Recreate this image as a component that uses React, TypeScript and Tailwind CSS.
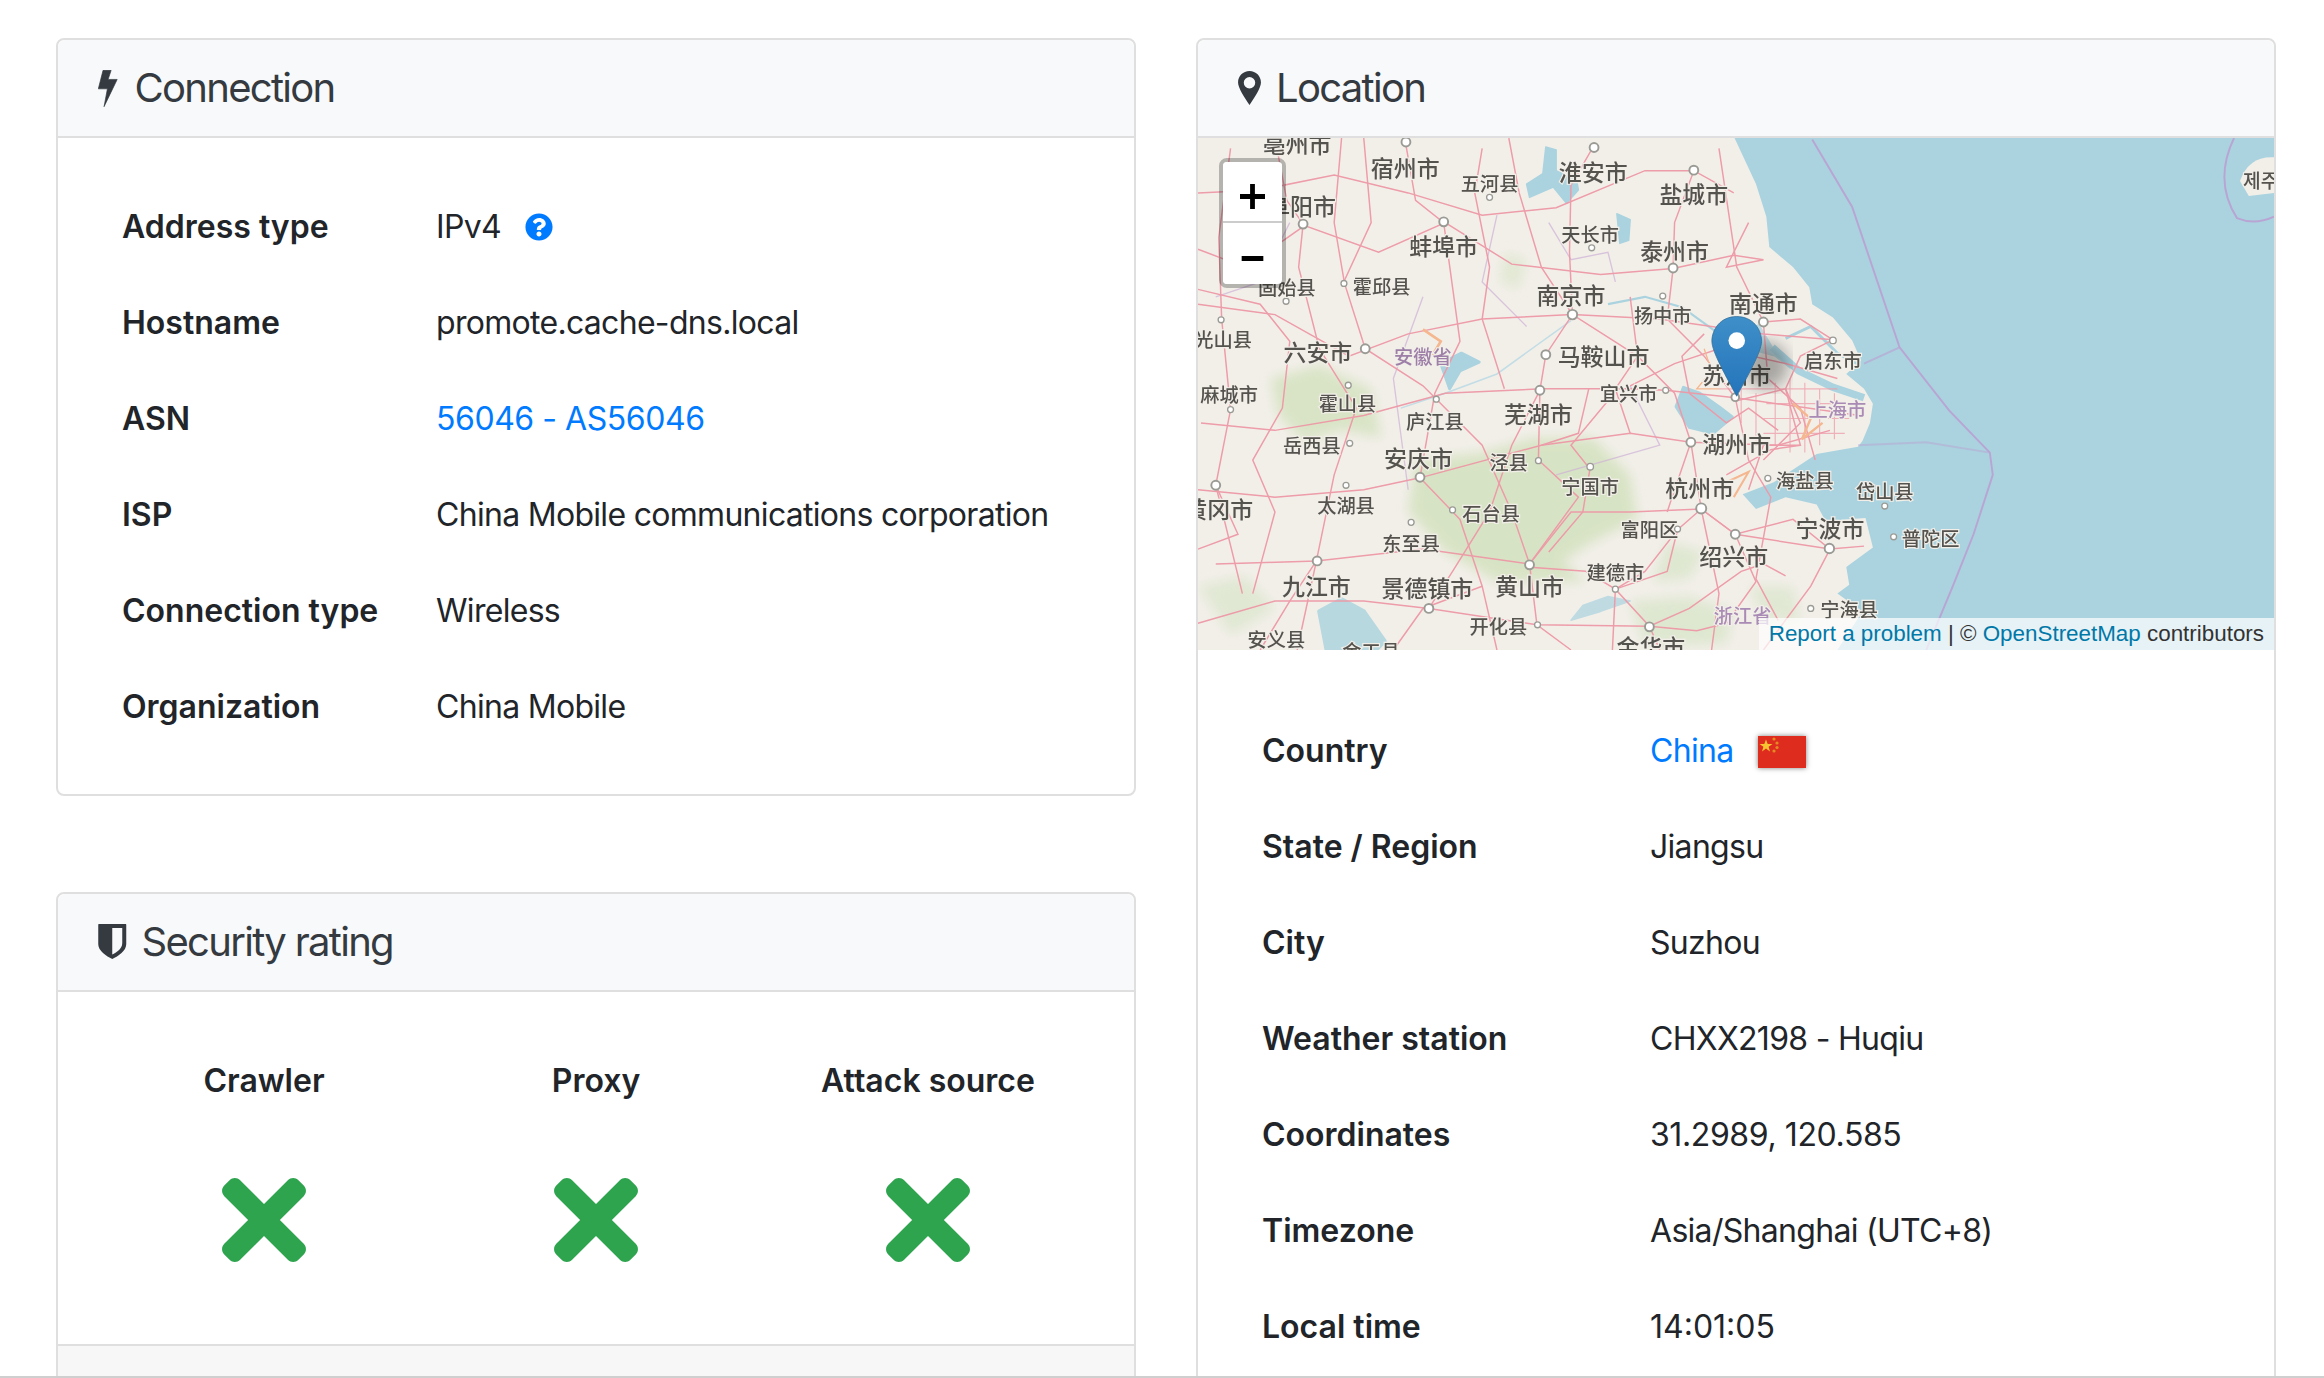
import React from 'react';
import { FaQuestionCircle, FaTimes } from 'react-icons/fa';

const labels: [string, number, number, number?, string?][] = [
  ['亳州市', 875, 103], ['宿州市', 948, 119], ['五河县', 1005, 129, 13], ['淮安市', 1075, 122], ['盐城市', 1143, 137],
  ['阜阳市', 878, 145], ['蚌埠市', 974, 172], ['天长市', 1073, 163, 13], ['泰州市', 1130, 175], ['固始县', 868, 199, 13],
  ['霍邱县', 932, 198, 13], ['南京市', 1060, 205], ['扬中市', 1122, 218, 13], ['南通市', 1190, 210], ['光山县', 825, 234, 13],
  ['六安市', 889, 243], ['安徽省', 960, 245, 13, '#9d7fa8'], ['马鞍山市', 1082, 246], ['启东市', 1237, 248, 13],
  ['苏州市', 1172, 259], ['麻城市', 829, 271, 13], ['霍山县', 909, 277, 13], ['宜兴市', 1099, 270, 13], ['庐江县', 968, 289, 13],
  ['芜湖市', 1038, 285], ['上海市', 1240, 281, 13, '#a98bb5'], ['岳西县', 885, 305, 13], ['湖州市', 1172, 305], ['安庆市', 957, 315],
  ['泾县', 1018, 317, 13], ['宁国市', 1073, 333, 13], ['杭州市', 1147, 335], ['海盐县', 1218, 329, 13], ['岱山县', 1272, 336, 13],
  ['黄冈市', 822, 349], ['太湖县', 908, 346, 13], ['石台县', 1006, 351, 13], ['富阳区', 1113, 362, 13], ['宁波市', 1235, 362],
  ['普陀区', 1303, 368, 13], ['东至县', 952, 371, 13], ['绍兴市', 1170, 381], ['建德市', 1090, 391, 13], ['九江市', 888, 401],
  ['景德镇市', 963, 402], ['黄山市', 1032, 401], ['开化县', 1011, 427, 13], ['宁海县', 1248, 416, 13], ['浙江省', 1176, 420, 13, '#a98bb5'],
  ['安义县', 861, 436, 13], ['金华市', 1114, 442], ['金工县', 925, 444, 13], ['제주', 1526, 127, 13],
];

const towns: [number, number, number][] = [
  [1075.6, 99.4, 3], [1143, 114.7, 3], [1129, 180.6, 3], [1122, 199.5, 2], [1061, 212, 3.2], [1190, 217, 3], [1237, 229.4, 2.2],
  [1043, 239, 3], [1039, 263, 3], [1124, 263, 2], [1171, 267.7, 2.6], [1074, 167, 2], [1141, 298, 3], [1038, 310.4, 2],
  [1073, 314.5, 2.2], [1193, 322.3, 2], [1148, 342.6, 3.4], [1132, 356.5, 2], [1171, 360, 3], [1234.6, 369.6, 3.2], [1272, 341, 2],
  [1278, 361.7, 2], [1032, 380.6, 3], [1090, 397, 2], [1222, 410, 2], [1037.4, 421, 2], [1113, 422.4, 3], [948.5, 95.7, 3],
  [879, 151, 3], [974, 149.5, 3], [1005, 133, 2], [906.6, 191, 2], [867.5, 203, 2], [823.6, 215.5, 2], [921, 235, 3], [909.5, 259.6, 2],
  [830, 276, 2], [969, 269, 2], [910.5, 298.7, 2], [958, 321.6, 3], [908, 327, 2], [820, 327, 3], [980, 343.6, 2], [952, 352, 2],
  [888.5, 378, 3], [964, 410, 3],
];

const roads = [
  'M808 130 L850 128 L900 118 L950 130 L1000 145 L1050 140 L1110 115 L1143 115 L1170 130',
  'M808 168 L840 180 L880 152 L930 170 L975 150 L1020 178 L1080 185 L1129 181 L1170 172 L1190 175',
  'M808 205 L860 212 L910 240 L950 225 L1000 215 L1061 212 L1120 215 L1190 225 L1237 229',
  'M810 285 L860 290 L920 280 L975 265 L1040 262 L1100 262 L1124 263 L1171 268 L1220 275 L1255 280',
  'M808 330 L860 335 L920 330 L958 322 L1040 300 L1100 292 L1141 298 L1200 300 L1235 290',
  'M820 380 L888 378 L960 370 L1032 380 L1060 345 L1100 345 L1148 343 L1171 360 L1235 370 L1258 368',
  'M808 420 L860 405 L920 405 L964 410 L1037 421 L1113 422 L1140 410 L1175 385 L1190 380 L1205 388',
  'M860 93 L868 135 L879 151 L876 180 L890 235 L915 275 L900 320 L888 378 L875 438',
  'M948 95 L955 135 L974 150 L985 230 L968 265 L958 322 L985 350 L1000 395 L1010 438',
  'M1018 93 L1025 130 L1040 180 L1061 212 L1043 239 L1039 263 L1038 310 L1065 335 L1032 380 L1037 421 L1060 438',
  'M1075 99 L1060 125 L1059 170 L1061 212 L1105 240 L1130 265 L1141 298 L1148 343 L1160 400 L1155 438',
  'M1143 115 L1130 150 L1129 181 L1125 215 L1150 240 L1171 268 L1180 310 L1195 335 L1185 390 L1200 418',
  'M1160 100 L1172 180 L1190 217 L1193 255 L1215 275 L1225 310',
  'M1237 229 L1215 240 L1205 262 L1215 285 L1190 310',
  'M830 100 L822 160 L824 215 L830 276 L820 327 L838 400',
  'M905 93 L900 150 L907 191 L921 235 L960 260 L1000 300 L1020 345 L1032 380',
  'M1039 263 L1020 300 L1005 345 L980 385 L964 410',
  'M1100 260 L1130 245 L1160 235 L1205 245 L1240 255',
  'M1148 343 L1132 357 L1110 385 L1090 397 L1088 438',
  'M1148 343 L1171 360 L1210 350 L1235 370 L1222 395 L1190 438',
  'M1172 270 L1205 262 L1215 300 L1190 300 L1180 330',
  'M1150 225 L1135 240 L1140 265 L1165 285 L1180 275 L1200 290',
  'M808 195 L850 205 L870 230 L865 275 L845 310 L860 345 L845 400',
  'M1090 397 L1125 385 L1132 357',
  'M1120 438 L1113 422 L1090 397 L1070 385 L1030 382',
  'M1171 360 L1185 392 L1165 420 L1145 425 L1113 422',
  'M1072 315 L1060 300 L1085 270 M1073 315 L1068 345 L1045 372',
  'M1141 298 L1130 330 L1125 345 M1165 320 L1195 303 L1215 300',
  'M1100 200 L1105 240 L1090 262 L1100 292 M1072 262 L1065 292 L1040 300',
  'M1000 100 L995 130 L1005 180 L1000 215 L1015 262 M920 93 L925 150 L906 191',
  'M1180 150 L1165 180 L1190 175 M1190 217 L1215 215 L1237 229',
  'M940 438 L960 410 L1000 395 M850 438 L870 405 L888 378 M808 370 L835 360 L820 327',
];

// streets around Shanghai, drawn close together
const cityGrid = 'M1195 262 H1240 M1192 272 H1245 M1190 282 H1248 M1190 292 H1245 M1198 258 V300 M1208 255 V305 M1218 258 V305 M1228 262 V300 M1238 265 V296 M1175 262 V285 M1185 265 V300 M1160 262 H1195';

// picture of the map, in the same coordinates as the rest of the tile
function MapTile() {
  return (
    <svg viewBox="808 93 727 345" className="block w-full h-full" preserveAspectRatio="none">
      <defs>
        <filter id="soft"><feGaussianBlur stdDeviation="0.4" /></filter>
        <filter id="softer"><feGaussianBlur stdDeviation="4" /></filter>
        <filter id="shade"><feGaussianBlur stdDeviation="5" /></filter>
        <linearGradient id="pin" x1="0" y1="0" x2="0" y2="1">
          <stop offset="0" stopColor="#3f8fc9" />
          <stop offset="1" stopColor="#2374bb" />
        </linearGradient>
      </defs>
      <rect x="808" y="93" width="727" height="345" fill="#aad3df" />
      <path
        d="M808 93 L1170.5 93 L1185 124 L1192 146 L1194 166.5 L1210 180 L1221 193.5 L1223 205 L1237 214 L1250 229.5 L1256 243 L1246 252 L1258 262 L1264 272 L1262 285 L1257 297 L1254 301 L1226 306 L1197 325 L1176 333 L1185 343 L1205 335 L1226 340 L1232 351 L1259 349 L1264 369 L1246 382 L1248 394 L1240 400 L1257 412 L1240 438 L808 438 Z"
        fill="#f2efe9"
      />
      <g filter="url(#softer)" opacity="0.7">
        <path d="M857 255 L890 246 L925 262 L932 295 L905 290 L880 298 L862 280 Z" fill="#cfe0b8" />
        <path d="M955 310 L1000 305 L1035 295 L1075 295 L1100 320 L1105 350 L1075 365 L1055 378 L1070 392 L1010 392 L975 372 L950 345 Z" fill="#cddfb6" />
        <path d="M1100 405 L1140 402 L1170 412 L1165 434 L1110 436 Z" fill="#d6e4c6" />
        <path d="M1125 365 L1150 372 L1140 390 L1115 392 Z" fill="#d6e4c6" />
        <path d="M808 395 L840 388 L860 410 L830 428 Z" fill="#d9e5ca" />
        <path d="M1180 395 L1210 395 L1215 420 L1190 418 Z" fill="#d9e5ca" />
        <path d="M1015 170 L1030 175 L1025 195 L1012 190 Z" fill="#dbe6cb" />
      </g>
      <g fill="#aad3df" stroke="#aad3df" strokeLinejoin="round">
        <path d="M1136 261 L1147 265 L1160 274 L1169 281 L1156 292 L1140 288 L1131 274 Z" strokeWidth="2" />
        <path d="M1043 99 L1050 101 L1050 115 L1064 122 L1065 128 L1057 137 L1048 126 L1032 133 L1030 124 L1041 117 Z" strokeWidth="1" />
        <path d="M1091 144 L1100 148 L1099 162 L1093 164 Z" strokeWidth="1" />
        <path d="M972 245 L986 238 L998 244 L985 250 L978 262 Z" strokeWidth="2" />
        <path d="M890 412 L905 404 L920 412 L934 432 L928 438 L895 438 Z" strokeWidth="3" opacity="0.8" />
        <path d="M1100 405 L1080 412 L1060 418 L1068 408 L1085 402 Z" strokeWidth="1" opacity="0.7" />
        <path d="M1160 225 L1187 219 L1196 234 L1208 248 L1198 240 L1180 235 Z" strokeWidth="1" opacity="0.75" />
      </g>
      <path d="M1196 234 L1214 250 L1237 261 L1258 268" fill="none" stroke="#aad3df" strokeWidth="5" />
      <path d="M1205 228 L1222 220 L1240 238 L1255 246" fill="none" stroke="#aad3df" strokeWidth="2" />
      <path d="M1085 205 L1110 200 L1135 207 L1160 225" fill="none" stroke="#aad3df" strokeWidth="1.5" />
      <path d="M945 275 L975 265 L1010 252 L1060 216" fill="none" stroke="#c2dde5" strokeWidth="1" />
      <path d="M1512 122 Q1518 105 1535 106 L1535 130 L1518 132 Z" fill="#f2efe9" />
      <path d="M1508 93 Q1494 122 1510 147 Q1522 152 1535 146" fill="none" stroke="#b9a5d3" strokeWidth="1.3" />
      <g fill="none" stroke="#b9a5d3" strokeWidth="1.3">
        <path d="M1223 94 L1250 139.5 L1282 234 L1315.6 276.7 L1343 305 L1345 320 L1332 360 L1318 395 L1300 438" />
        <path d="M1282 234 L1258 245" opacity="0.7" />
        <path d="M1343 305 L1300 298 L1254 300" opacity="0.5" />
      </g>
      <path d="M1010 145 L1000 190 L1030 220 M960 200 L940 255 L950 330 M870 150 L850 190 L820 200 M1100 260 L1120 300 L1050 320 M1045 150 L1060 175 L1085 170 L1090 190" fill="none" stroke="#cdb0d6" strokeWidth="0.9" opacity="0.7" />
      <g filter="url(#soft)">
        <g fill="none" stroke="#ee98a6" strokeWidth="1" opacity="0.95">
          {roads.map((d, i) => (
            <path key={i} d={d} />
          ))}
          <path d={cityGrid} opacity="0.75" strokeWidth="0.8" />
        </g>
        <g fill="none" stroke="#f4b78f" strokeWidth="0.9">
          <path d="M1150 235 L1155 250 L1145 262 L1160 262" />
          <path d="M1210 272 L1222 282 L1216 296 L1230 285" strokeWidth="1.6" />
          <path d="M960 222 L972 230 L966 240" strokeWidth="1.8" />
          <path d="M1165 325 L1180 318 L1170 335" strokeWidth="1.4" />
        </g>
        {towns.map(([x, y, r], i) => (
          <circle key={i} cx={x} cy={y} r={r} fill="#fff" stroke="#9b9b95" strokeWidth={r > 2.4 ? 1.3 : 0.9} />
        ))}
        {labels.map(([t, x, y, s, c], i) => (
          <text
            key={i}
            x={x}
            y={y}
            textAnchor="middle"
            fontSize={s ?? 15.5}
            fontWeight={500}
            fill={c ?? '#55524e'}
            stroke="#f2efe9"
            strokeWidth="1.6"
            paintOrder="stroke"
            fontFamily='"Noto Sans CJK SC", "Noto Sans CJK KR", sans-serif'
          >
            {t}
          </text>
        ))}
      </g>
      <ellipse cx="1192" cy="246" rx="15" ry="16" fill="#000" opacity="0.3" filter="url(#shade)" />
      <path
        d="M1172 213.3 C1161 213.3 1155.2 222 1155.2 230 C1155.2 237 1165 254 1172 267 C1179 254 1188.8 237 1188.8 230 C1188.8 222 1183 213.3 1172 213.3 Z"
        fill="url(#pin)"
        stroke="#2e6c97"
        strokeWidth="0.5"
      />
      <circle cx="1172" cy="229.5" r="5.6" fill="#fff" />
    </svg>
  );
}

function Row({ label, col, children }: { label: string; col: string; children: React.ReactNode }) {
  return (
    <div className={`grid ${col} h-24 items-center px-6`}>
      <div className="font-semibold text-[#212529]">{label}</div>
      <div className="flex items-center text-[#212529] whitespace-nowrap tracking-[-0.7px]">{children}</div>
    </div>
  );
}

function CardHeader({ icon, title }: { icon: React.ReactNode; title: string }) {
  return (
    <div className="h-[98px] shrink-0 flex items-center px-10 bg-[#f8f9fa] border-b-2 border-[#dfdfdf] text-[#343a40] text-[40px] rounded-t-lg">
      {icon}
      <span className="leading-none tracking-[-1.7px]">{title}</span>
    </div>
  );
}

function BoltIcon() {
  return (
    <svg viewBox="0 0 58 110" className="w-[19.5px] h-[37px] mr-[17px] fill-current">
      <path d="M15 1H39L30 28H57L18 109L28 56H1Z" stroke="currentColor" strokeWidth="2" strokeLinejoin="round" />
    </svg>
  );
}

function ShieldIcon() {
  return (
    <svg viewBox="0 0 28 35" className="w-[28.5px] h-[35px] mr-[15px] -mt-0.5">
      <path d="M0.5 0H27.5Q28 0 28 1V20C28 27 20 32 14 35C8 32 0 27 0 20V1Q0 0 0.5 0Z" fill="currentColor" />
      <path d="M14 4H24V19C24 25 18 28.5 14 30.5Z" fill="#f8f9fa" />
    </svg>
  );
}

function PinIcon() {
  return (
    <svg viewBox="0 0 68 101" className="w-[23px] h-[34px] mr-[15px]">
      <path
        fillRule="evenodd"
        fill="currentColor"
        d="M34 0C15 0 0 15 0 34C0 50 20 80 34 101C48 80 68 50 68 34C68 15 53 0 34 0ZM34 18A17 17 0 1 1 34 52A17 17 0 1 1 34 18Z"
      />
    </svg>
  );
}

const leftCol = 'grid-cols-[314px_1fr]';
const rightCol = 'grid-cols-[388px_1fr]';

export default function App() {
  return (
    <div
      className="relative h-[1378px] overflow-hidden bg-white text-[32px] leading-12 border-b-2 border-[#cfcfcf]"
      style={{ fontFamily: 'Inter, "Liberation Sans", sans-serif' }}
    >
      <div className="flex gap-[60px] pl-14 pt-[38px]">
        <div className="w-[1080px] shrink-0">
          {/* Connection */}
          <section className="border-2 border-[#dfdfdf] rounded-lg mb-24">
            <CardHeader icon={<BoltIcon />} title="Connection" />
            <div className="px-10 pt-[41px] pb-[39px]">
              <Row label="Address type" col={leftCol}>
                <span>IPv4</span>
                <FaQuestionCircle className="ml-[24px] w-[28px] h-[28px] text-[#007bff]" />
              </Row>
              <Row label="Hostname" col={leftCol}>promote.cache-dns.local</Row>
              <Row label="ASN" col={leftCol}>
                <span className="text-[#007bff] tracking-[-0.45px]">56046 - AS56046</span>
              </Row>
              <Row label="ISP" col={leftCol}>China Mobile communications corporation</Row>
              <Row label="Connection type" col={leftCol}>Wireless</Row>
              <Row label="Organization" col={leftCol}>China Mobile</Row>
            </div>
          </section>

          {/* Security rating */}
          <section className="border-2 border-[#dfdfdf] rounded-lg">
            <CardHeader icon={<ShieldIcon />} title="Security rating" />
            <div className="grid grid-cols-3 px-10 h-[354px] text-center border-b-2 border-[#dfdfdf]">
              {['Crawler', 'Proxy', 'Attack source'].map((name) => (
                <div key={name} className="flex flex-col items-center pt-[65px]">
                  <div className="font-semibold text-[#212529]">{name}</div>
                  <FaTimes className="mt-[54px] w-[84px] h-[122px] text-[#2ea44f]" />
                </div>
              ))}
            </div>
            <div className="h-24 bg-[#f7f7f7]" />
          </section>
        </div>

        {/* Location */}
        <section className="w-[1080px] shrink-0 border-2 border-[#dfdfdf] rounded-t-lg h-[1400px]">
          <CardHeader icon={<PinIcon />} title="Location" />
          <div className="relative h-[512px] overflow-hidden">
            <MapTile />
            <div className="absolute left-[21px] top-[20px] w-[67px] rounded-lg border-4 border-black/25 bg-clip-padding overflow-hidden">
              <div className="h-[61px] pt-[10px] bg-white border-b-2 border-[#ccc] flex items-center justify-center text-black">
                <svg viewBox="0 0 26 26" className="w-[25px] h-[25px]"><path d="M10.5 0h5v10.5H26v5H15.5V26h-5V15.5H0v-5h10.5z" /></svg>
              </div>
              <div className="h-[61px] pt-[10px] bg-white flex items-center justify-center text-black">
                <svg viewBox="0 0 26 6" className="w-[25px] h-[5px]"><rect width="26" height="6" /></svg>
              </div>
            </div>
            <div
              className="absolute right-0 bottom-0 h-8 flex items-center px-2.5 bg-white/70 text-[22.4px] text-[#333] whitespace-nowrap"
              style={{ fontFamily: '"Liberation Sans", Arial, sans-serif' }}
            >
              <span className="text-[#0078a8]">Report a problem</span>
              <span>&nbsp;|&nbsp;©&nbsp;</span>
              <span className="text-[#0078a8]">OpenStreetMap</span>
              <span>&nbsp;contributors</span>
            </div>
          </div>
          <div className="pt-[53px] px-10">
            <Row label="Country" col={rightCol}>
              <span className="text-[#007bff]">China</span>
              <svg viewBox="0 0 48 32" className="ml-[25px] mt-0.5 w-12 h-8 shadow-[0_0_5px_rgba(0,0,0,0.5)]">
                <rect width="48" height="32" fill="#de2d1e" />
                <polygon points="8,3.5 9.7,8 14.5,8 10.6,10.8 12,15.5 8,12.6 4,15.5 5.4,10.8 1.5,8 6.3,8" fill="#f7c531" />
                <circle cx="16" cy="3" r="1.6" fill="#e58a22" />
                <circle cx="19" cy="7" r="1.6" fill="#e58a22" />
                <circle cx="19" cy="11.5" r="1.6" fill="#e58a22" />
                <circle cx="16" cy="15" r="1.6" fill="#e58a22" />
              </svg>
            </Row>
            <Row label="State / Region" col={rightCol}>Jiangsu</Row>
            <Row label="City" col={rightCol}>Suzhou</Row>
            <Row label="Weather station" col={rightCol}>CHXX2198 - Huqiu</Row>
            <Row label="Coordinates" col={rightCol}>
              <span className="tracking-[-0.4px]">31.2989, 120.585</span>
            </Row>
            <Row label="Timezone" col={rightCol}>Asia/Shanghai (UTC+8)</Row>
            <Row label="Local time" col={rightCol}>
              <span className="tracking-normal">14:01:05</span>
            </Row>
          </div>
        </section>
      </div>
    </div>
  );
}
